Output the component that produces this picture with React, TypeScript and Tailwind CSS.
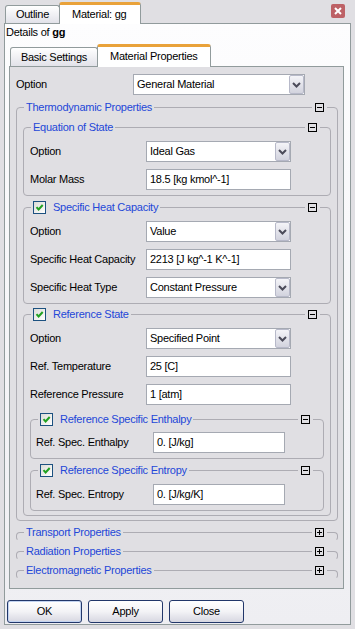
import React from "react";

function Chevron() {
  return (
    <svg width="9" height="6" viewBox="0 0 9 6" className="block">
      <path d="M1 1 L4.5 4.5 L8 1" stroke="#4b4b5a" strokeWidth="2" fill="none" />
    </svg>
  );
}

function Select({ value, w }: { value: string; w: string }) {
  return (
    <div className={`flex h-[21px] ${w} border border-[#a5a9b2] bg-white`}>
      <div className="flex-1 overflow-hidden whitespace-nowrap pl-[3px] leading-[19px]">{value}</div>
      <div className="flex w-[15px] items-center justify-center rounded-[2px] border border-[#b7b9c9] bg-linear-to-b from-[#f4f4f8] to-[#d2d3de]">
        <Chevron />
      </div>
    </div>
  );
}

function Input({ value, w }: { value: string; w: string }) {
  return (
    <div className={`h-[21px] ${w} overflow-hidden whitespace-nowrap border border-[#a5a9b2] bg-white pl-[3px] leading-[19px]`}>
      {value}
    </div>
  );
}

function Row({ label, lw, children }: { label: string; lw: string; children: React.ReactNode }) {
  return (
    <div className="flex h-[21px] items-center">
      <div className={`${lw} shrink-0 whitespace-nowrap`}>{label}</div>
      {children}
    </div>
  );
}

function CheckBox() {
  return (
    <span className="flex h-[13px] w-[13px] shrink-0 items-center justify-center border border-[#1c5180] bg-linear-to-br from-[#dcdcd7] to-white">
      <svg width="11" height="11" viewBox="0 0 11 11" className="block">
        <path d="M2.5 5.2 L4.6 7.5 L8.7 3" stroke="#21a121" strokeWidth="2" fill="none" />
      </svg>
    </span>
  );
}

function ToggleBox({ plus }: { plus?: boolean }) {
  return (
    <svg width="9" height="9" viewBox="0 0 9 9" className="block">
      <rect x="0.5" y="0.5" width="8" height="8" fill="none" stroke="#000" />
      <path d="M2 4.5H7" stroke="#000" />
      {plus && <path d="M4.5 2V7" stroke="#000" />}
    </svg>
  );
}

function Group({
  title,
  check,
  collapsed,
  className,
  bodyClass,
  children,
}: {
  title: string;
  check?: boolean;
  collapsed?: boolean;
  className?: string;
  bodyClass?: string;
  children?: React.ReactNode;
}) {
  return (
    <div
      className={`rounded-[4px] border border-[#adacb3] ${collapsed ? "h-[9px] border-b-transparent" : ""} ${className ?? ""}`}
    >
      <div className="-mt-[7px] flex h-[13px] items-center">
        <div className="ml-[7px] flex h-[13px] items-center gap-[7px] bg-[#e0dfe3] px-[2px] leading-[13px] text-[#2347d8]">
          {check && <CheckBox />}
          <span className="whitespace-nowrap">{title}</span>
        </div>
        <div className="flex-1" />
        <div className="mr-[10px] bg-[#e0dfe3] px-[3px]">
          <ToggleBox plus={collapsed} />
        </div>
      </div>
      {!collapsed && <div className={bodyClass}>{children}</div>}
    </div>
  );
}

function Button({ label, def }: { label: string; def?: boolean }) {
  return (
    <div
      className={`flex h-[23px] w-[75px] items-center justify-center rounded-[3px] border border-[#22376a] bg-linear-to-b from-white via-[#f3f3f6] to-[#d7d7e1] ${
        def ? "shadow-[inset_0_0_0_1px_#c2d3f0]" : ""
      }`}
    >
      {label}
    </div>
  );
}

export default function App() {
  const L2 = "w-[116px]";
  const C2 = "w-[145px]";
  const L3 = "w-[117px]";
  const C3 = "w-[132px]";
  return (
    <div className="h-[629px] w-[355px] overflow-hidden bg-[#e0dfe3] font-['Liberation_Sans',Arial,sans-serif] text-[11px] tracking-[-0.25px] text-black">
      {/* top tab strip */}
      <div className="flex h-[24px] items-end pl-[5px]">
        <div className="mb-px flex h-[18px] w-[55px] items-center justify-center rounded-t-[3px] border border-b-0 border-[#919b9c] bg-linear-to-b from-white to-[#e2e2e9]">
          Outline
        </div>
        <div className="relative z-10 -ml-px flex h-[22px] w-[82px] items-center rounded-t-[3px] border-x border-t-[3px] border-x-[#919b9c] border-t-[#e9a23a] bg-white pl-[12px]">
          Material: gg
        </div>
        <div className="mr-[10px] ml-auto mt-[4px] flex h-[14px] w-[14px] items-center justify-center self-start rounded-[2px] bg-[#bd6166]">
          <svg width="8" height="8" viewBox="0 0 8 8" className="block">
            <path d="M1 1L7 7M7 1L1 7" stroke="#fff" strokeWidth="2" />
          </svg>
        </div>
      </div>

      {/* outer panel */}
      <div className="-mt-px mx-[4px] border border-[#919b9c] bg-linear-to-b from-[#fdfdfe] to-[#eeeef2] pb-px">
        <div className="h-[20px] pl-[1px] leading-[17px]">
          Details of <b>gg</b>
        </div>

        {/* inner tab strip */}
        <div className="flex h-[23px] items-end pl-[5px]">
          <div className="mb-px flex h-[19px] w-[88px] items-center justify-center rounded-t-[3px] border border-b-0 border-[#919b9c] bg-linear-to-b from-white to-[#e2e2e9]">
            Basic Settings
          </div>
          <div className="relative z-10 -ml-px flex h-[23px] w-[114px] items-center rounded-t-[3px] border-x border-t-[3px] border-x-[#919b9c] border-t-[#e9a23a] bg-white pb-[2px] pl-[12px]">
            Material Properties
          </div>
        </div>

        {/* inner panel */}
        <div className="-mt-px ml-[4px] mr-[6px] border border-[#919b9c] bg-[#e0dfe3] pb-[9px] pl-[6px] pr-[5px] pt-[7px]">
          <Row label="Option" lw="w-[117px]">
            <Select value="General Material" w="w-[172px]" />
          </Row>

          <Group title="Thermodynamic Properties" className="mt-[12px]" bodyClass="px-[6px] pb-[4px]">
            <Group
              title="Equation of State"
              className="mt-[13px]"
              bodyClass="flex flex-col gap-[7px] pb-[5px] pl-[6px] pt-[7px]"
            >
              <Row label="Option" lw={L2}>
                <Select value="Ideal Gas" w={C2} />
              </Row>
              <Row label="Molar Mass" lw={L2}>
                <Input value="18.5 [kg kmol^-1]" w={C2} />
              </Row>
            </Group>

            <Group
              title="Specific Heat Capacity"
              check
              className="mt-[11px]"
              bodyClass="flex flex-col gap-[7px] pb-[5px] pl-[6px] pt-[7px]"
            >
              <Row label="Option" lw={L2}>
                <Select value="Value" w={C2} />
              </Row>
              <Row label="Specific Heat Capacity" lw={L2}>
                <Input value="2213 [J kg^-1 K^-1]" w={C2} />
              </Row>
              <Row label="Specific Heat Type" lw={L2}>
                <Select value="Constant Pressure" w={C2} />
              </Row>
            </Group>

            <Group title="Reference State" check className="mt-[10px]" bodyClass="px-[6px] pb-[4px] pt-[7px]">
              <div className="flex flex-col gap-[7px]">
                <Row label="Option" lw={L2}>
                  <Select value="Specified Point" w={C2} />
                </Row>
                <Row label="Ref. Temperature" lw={L2}>
                  <Input value="25 [C]" w={C2} />
                </Row>
                <Row label="Reference Pressure" lw={L2}>
                  <Input value="1 [atm]" w={C2} />
                </Row>
              </div>

              <Group
                title="Reference Specific Enthalpy"
                check
                className="mt-[14px]"
                bodyClass="pb-[5px] pl-[5px] pt-[6px]"
              >
                <Row label="Ref. Spec. Enthalpy" lw={L3}>
                  <Input value="0. [J/kg]" w={C3} />
                </Row>
              </Group>

              <Group
                title="Reference Specific Entropy"
                check
                className="mt-[11px]"
                bodyClass="pb-[5px] pl-[5px] pt-[7px]"
              >
                <Row label="Ref. Spec. Entropy" lw={L3}>
                  <Input value="0. [J/kg/K]" w={C3} />
                </Row>
              </Group>
            </Group>
          </Group>

          <Group title="Transport Properties" collapsed className="mt-[11px]" />
          <Group title="Radiation Properties" collapsed className="mt-[10px]" />
          <Group title="Electromagnetic Properties" collapsed className="mt-[10px]" />
        </div>

        {/* buttons */}
        <div className="mt-[11px] flex gap-[6px] pl-[2px]">
          <Button label="OK" def />
          <Button label="Apply" />
          <Button label="Close" />
        </div>
      </div>
    </div>
  );
}
